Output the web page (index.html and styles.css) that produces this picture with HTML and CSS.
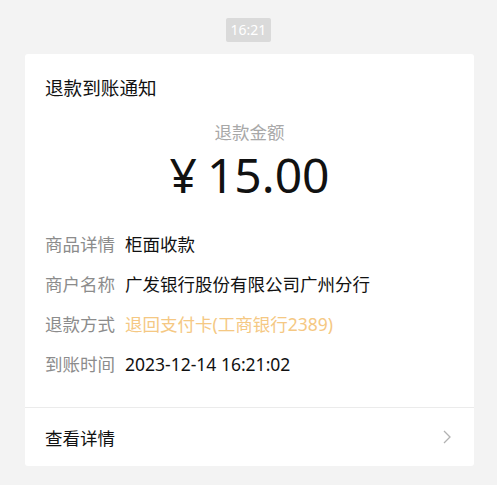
FILE: index.html
```html
<!DOCTYPE html>
<html lang="zh-CN">
<head>
    <meta charset="UTF-8">
    <meta name="viewport" content="width=device-width, initial-scale=1.0">
    <title>退款到账通知</title>
    <link rel="stylesheet" href="styles.css">
</head>
<body>
    <div class="time-wrap">
        <span class="time">16:21</span>
    </div>

    <div class="card">
        <div class="card-body">
            <div class="title">退款到账通知</div>

            <div class="amount-label">退款金额</div>
            <div class="amount"><span class="yen">¥</span>15.00</div>

            <div class="rows">
                <div class="row">
                    <span class="label">商品详情</span>
                    <span class="value">柜面收款</span>
                </div>
                <div class="row">
                    <span class="label">商户名称</span>
                    <span class="value">广发银行股份有限公司广州分行</span>
                </div>
                <div class="row">
                    <span class="label">退款方式</span>
                    <span class="value highlight">退回支付卡(工商银行2389)</span>
                </div>
                <div class="row">
                    <span class="label">到账时间</span>
                    <span class="value">2023-12-14 16:21:02</span>
                </div>
            </div>
        </div>

        <div class="card-footer">
            <span>查看详情</span>
            <svg class="chevron" width="8" height="14" viewBox="0 0 8 14">
                <path d="M1 1 L7 7 L1 13" fill="none" stroke="#b2b2b2" stroke-width="1.3"/>
            </svg>
        </div>
    </div>
</body>
</html>
```

FILE: styles.css
```css
body {
    margin: 0;
    background-color: #f3f3f3;
    font-family: "Noto Sans", "Noto Sans CJK SC", sans-serif;
    color: #111;
}
.time-wrap {
    display: flex;
    justify-content: center;
    padding-top: 18px;
}
.time {
    background-color: #dadada;
    color: #fff;
    font-size: 14px;
    line-height: 24px;
    padding: 0 5px;
    border-radius: 2px;
}
.card {
    margin: 12px 23px 0 25px;
    background: #fff;
    border-radius: 3px;
}
.card-body {
    padding: 21px 20px 23px 20px;
}
.title {
    font-size: 18.6px;
    line-height: 26px;
}
.amount-label {
    margin-top: 22px;
    text-align: center;
    color: #a8a8a8;
    font-size: 17.5px;
    line-height: 18px;
}
.amount {
    margin-top: 1px;
    text-align: center;
    font-size: 48px;
    line-height: 66px;
}
.yen {
    margin-right: 10px;
}
.rows {
    margin-top: 16px;
}
.row {
    display: flex;
    gap: 10px;
    font-size: 17.5px;
    line-height: 40px;
}
.label {
    color: #8c8c8c;
}
.highlight {
    color: #f5c883;
}
.card-footer {
    display: flex;
    justify-content: space-between;
    align-items: center;
    border-top: 1px solid #ebebeb;
    padding: 0 20px;
    height: 58px;
    font-size: 17.5px;
}
.chevron {
    margin-right: 3px;
}
```
